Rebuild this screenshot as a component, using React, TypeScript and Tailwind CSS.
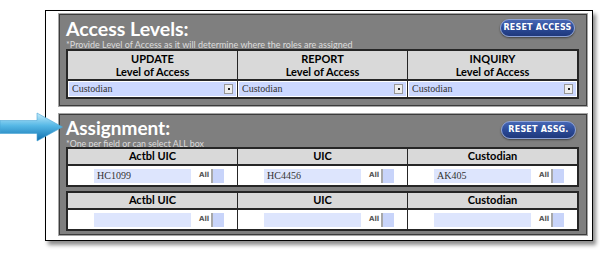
import React from 'react';

const label = { fontFamily: 'Lato, "Open Sans", sans-serif' };
const serif = { fontFamily: '"Liberation Serif", serif' };
const verdana = { fontFamily: '"DejaVu Sans", Verdana, sans-serif' };

const PillButton: React.FC<{ text: string }> = ({ text }) => (
    <div
        className="h-[18px] w-[75px] rounded-full border border-[#8ea3d6] bg-gradient-to-b from-[#4767b5] via-[#2c4b98] to-[#1f387c] shadow-[0_1px_2px_rgba(0,0,0,0.5)] flex items-center justify-center text-white text-[8px] font-bold tracking-[0.2px]"
        style={verdana}
    >
        {text}
    </div>
);

const SelectCell: React.FC<{ value: string }> = ({ value }) => (
    <div className="h-[16px] px-[1px] pt-[1px] bg-white">
        <div className="h-[14px] bg-[#ccd8ff] flex items-center justify-between pl-[3px] pr-[3px]">
            <span className="text-[10px] leading-none text-[#333]" style={serif}>{value}</span>
            <span className="w-[9px] h-[10px] bg-[#f0f0f0] border border-[#9a9a9a] flex items-center justify-center">
                <span className="w-[2px] h-[2px] bg-[#222]" />
            </span>
        </div>
    </div>
);

const AssignCell: React.FC<{ value: string }> = ({ value }) => (
    <div className="h-full bg-white flex items-center pl-[26px]">
        <div className="w-[97px] h-[14px] bg-[#dde5fd] flex items-center pl-[3px]">
            <span className="text-[10px] leading-none text-[#333]" style={serif}>{value}</span>
        </div>
        <span className="ml-[8px] text-[7px] font-bold text-[#555]" style={verdana}>All</span>
        <span className="ml-[2px] w-[13px] h-[14px] bg-[#c8d4fa] border-l-2 border-[#a8a8a8]" />
    </div>
);

const AssignTable: React.FC<{ values: string[] }> = ({ values }) => {
    const heads = ['Actbl UIC', 'UIC', 'Custodian'];
    return (
        <div className="border-2 border-[#262626] grid grid-cols-3 bg-[#262626] gap-x-[1px]">
            {heads.map((h, i) => (
                <div key={h} className="flex flex-col">
                    <div className="h-[17px] bg-[#d9d9d9] flex items-center justify-center text-[11px] font-bold text-black border-b-2 border-[#262626]" style={label}>
                        {h}
                    </div>
                    <div className="h-[19px]">
                        <AssignCell value={values[i]} />
                    </div>
                </div>
            ))}
        </div>
    );
};

const App: React.FC = () => {
    const levels = ['UPDATE', 'REPORT', 'INQUIRY'];
    return (
        <div className="relative w-[600px] h-[266px] bg-white overflow-hidden">
            <div className="ml-[45px] mt-[10px] w-[548px] h-[231px] border border-black bg-white shadow-[3px_4px_4px_rgba(0,0,0,0.45)] pl-[13px] pr-[5px] pt-[3px] flex flex-col gap-[8px]">
                {/* Access Levels */}
                <div className="h-[92px] bg-[#7f7f7f] border border-[#3c3c3c] shadow-[0_0_0_1px_#a5a5a5] px-[6px] pr-[7px] flex flex-col">
                    <div className="flex justify-between items-start h-[34px]">
                        <div className="flex flex-col pt-[2px]">
                            <span className="text-[19.5px] leading-[24px] font-bold text-white" style={label}>Access Levels:</span>
                            <span className="text-[9px] leading-[9px] text-[#dcdcdc] -mt-[1px]" style={label}>
                                *Provide Level of Access as it will determine where the roles are assigned
                            </span>
                        </div>
                        <div className="mt-[4px] mr-[4px]">
                            <PillButton text="RESET ACCESS" />
                        </div>
                    </div>
                    <div className="border-2 border-[#262626] grid grid-cols-3 bg-[#262626] gap-x-[1px]">
                        {levels.map(l => (
                            <div key={l} className="flex flex-col">
                                <div className="h-[30px] bg-[#d9d9d9] flex flex-col items-center justify-center text-[11px] leading-[13px] font-bold text-black border-b-2 border-[#262626]" style={label}>
                                    <span>{l}</span>
                                    <span>Level of Access</span>
                                </div>
                                <SelectCell value="Custodian" />
                            </div>
                        ))}
                    </div>
                </div>

                {/* Assignment */}
                <div className="h-[121px] bg-[#7f7f7f] border border-[#3c3c3c] shadow-[0_0_0_1px_#a5a5a5] px-[6px] pr-[7px] flex flex-col">
                    <div className="flex justify-between items-start h-[32px]">
                        <div className="flex flex-col pt-[2px]">
                            <span className="text-[19px] leading-[22px] font-bold text-white" style={label}>Assignment:</span>
                            <span className="text-[8.8px] leading-[9px] text-[#dcdcdc]" style={label}>
                                *One per field or can select ALL box
                            </span>
                        </div>
                        <div className="mt-[6px] mr-[3px]">
                            <PillButton text="RESET ASSG." />
                        </div>
                    </div>
                    <AssignTable values={['HC1099', 'HC4456', 'AK405']} />
                    <div className="h-[4px]" />
                    <AssignTable values={['', '', '']} />
                </div>
            </div>

            {/* pointer arrow */}
            <svg className="absolute left-0 top-[112px]" width="64" height="30" viewBox="0 0 64 30">
                <defs>
                    <linearGradient id="arrowFill" x1="0" y1="0" x2="0" y2="1">
                        <stop offset="0" stopColor="#c4ecfb" />
                        <stop offset="0.45" stopColor="#56b8e6" />
                        <stop offset="1" stopColor="#0f6fae" />
                    </linearGradient>
                </defs>
                <path d="M0 8.5 H37 V1 L62.5 15 L37 29 V21.5 H0 Z" fill="url(#arrowFill)" stroke="#4aa6d6" strokeWidth="0.6" />
            </svg>
        </div>
    );
};

export default App;
